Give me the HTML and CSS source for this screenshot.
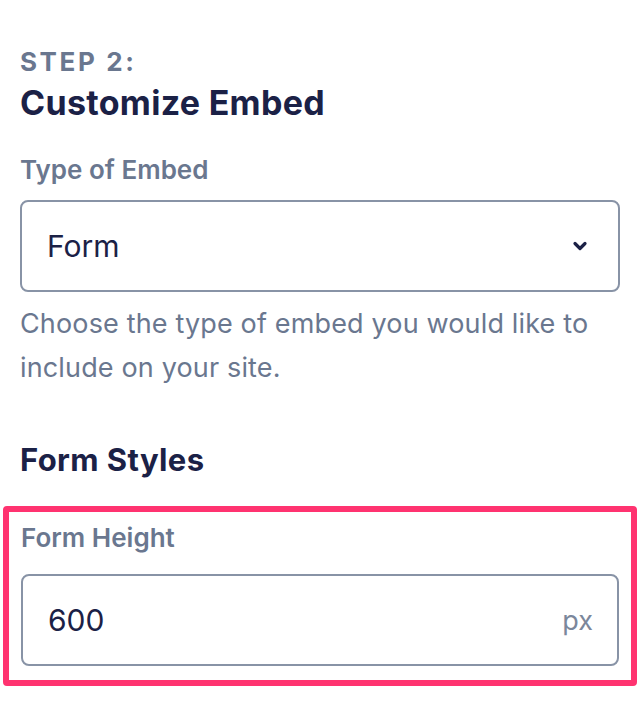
FILE: index.html
```html
<!DOCTYPE html>
<html lang="en">
<head>
    <meta charset="UTF-8">
    <meta name="viewport" content="width=device-width, initial-scale=1.0">
    <title>Customize Embed</title>
    <link rel="stylesheet" href="styles.css">
</head>
<body>
    <div class="panel">
        <div class="step">STEP 2:</div>
        <h1 class="title">Customize Embed</h1>

        <div class="field">
            <label class="label">Type of Embed</label>
            <div class="select">
                <span class="select-value">Form</span>
                <svg class="chevron" width="16" height="12" viewBox="0 0 16 12">
                    <path d="M3 3.5 L8 8.5 L13 3.5" fill="none" stroke="#1b2146" stroke-width="3.2" stroke-linecap="round" stroke-linejoin="round"/>
                </svg>
            </div>
            <p class="help">Choose the type of embed you would like to include on your site.</p>
        </div>

        <h2 class="subtitle">Form Styles</h2>

        <div class="highlight">
            <label class="label">Form Height</label>
            <div class="input">
                <span class="input-value">600</span>
                <span class="unit">px</span>
            </div>
        </div>
    </div>
</body>
</html>
```

FILE: styles.css
```css
/* Основа */
body {
    margin: 0;
    background-color: #fff;
    font-family: Inter, "Noto Sans", sans-serif;
    color: #1b2146;
}
.panel {
    padding: 46px 20px 0 20px;
}

/* Заголовки */
.step {
    font-size: 26px;
    font-weight: 700;
    letter-spacing: 0.1em;
    line-height: 32px;
    color: #6a778f;
}
.title {
    margin: 4px 0 0 0;
    font-size: 34px;
    font-weight: 700;
    letter-spacing: 0.3px;
    line-height: 42px;
    color: #1b2146;
}
.subtitle {
    margin: 51px 0 0 0;
    font-size: 31px;
    font-weight: 700;
    letter-spacing: 0.4px;
    line-height: 38px;
    color: #1b2146;
}

/* Поля */
.field {
    margin-top: 30px;
}
.label {
    display: block;
    font-size: 26px;
    font-weight: 600;
    line-height: 32px;
    color: #6a778f;
}
.select,
.input {
    margin-top: 14px;
    height: 92px;
    box-sizing: border-box;
    border: 2px solid #8893a6;
    border-radius: 8px;
    display: flex;
    align-items: center;
    justify-content: space-between;
    padding: 0 32px 0 25px;
}
.select-value,
.input-value {
    font-size: 30px;
    color: #1b2146;
}
.chevron {
    margin-right: -2px;
}
.help {
    margin: 10px 0 0 0;
    font-size: 27px;
    letter-spacing: 0.15px;
    line-height: 44px;
    color: #6a778f;
}

/* Рамка виділення */
.highlight {
    margin: 27px -17px 0 -17px;
    padding: 10px 12px 14px 12px;
    border: 6px solid #ff3370;
    border-radius: 4px;
}
.highlight .input {
    margin-top: 20px;
    padding-right: 24px;
}
.unit {
    font-size: 27px;
    color: #7b879b;
}
```
